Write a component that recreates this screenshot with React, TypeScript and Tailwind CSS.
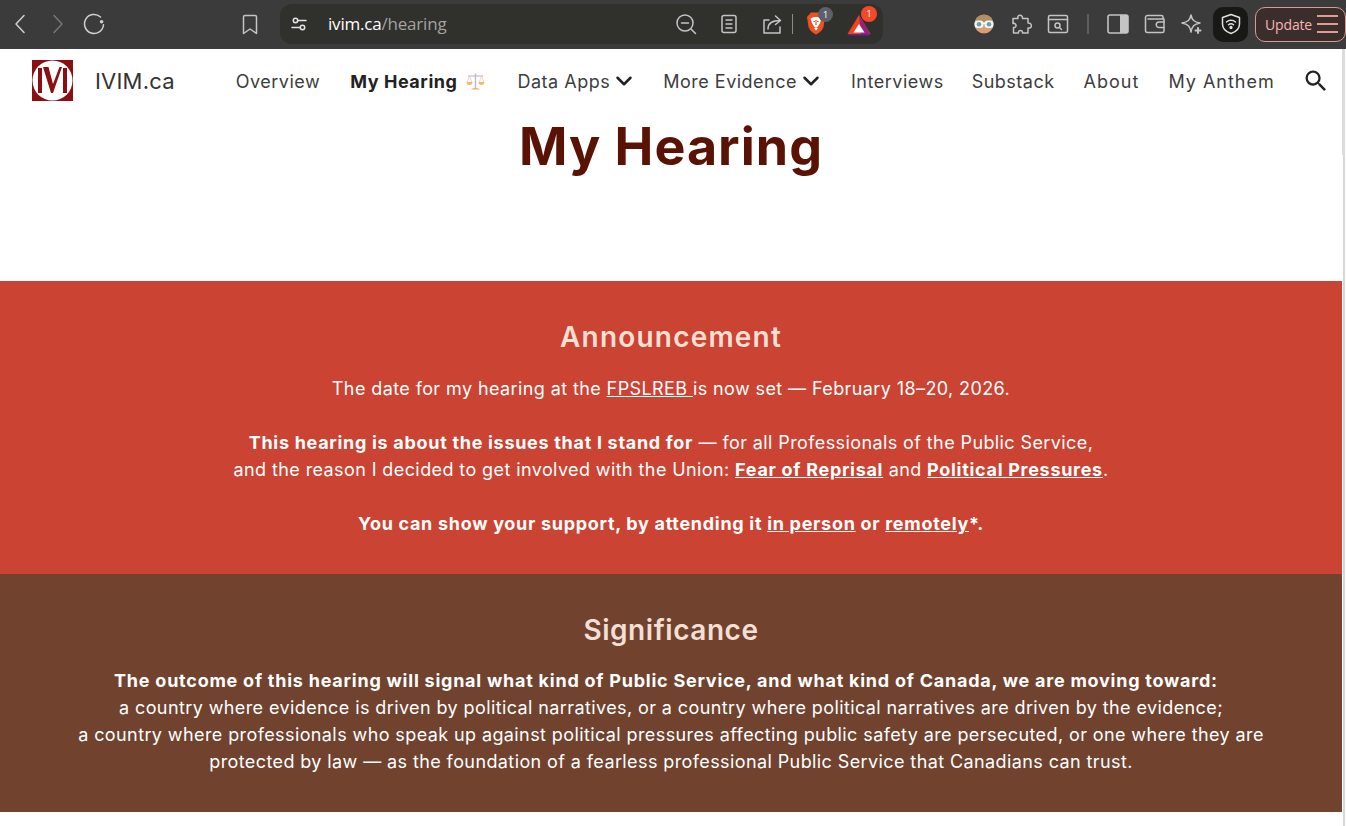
import { ChevronDown } from "lucide-react";
import { MdSearch } from "react-icons/md";

const FONT = "font-['Inter','Liberation_Sans',sans-serif]";

// Browser toolbar icons, stroked the same grey
function ToolIcon({ children, w = 24, h = 24, className = "" }: { children: React.ReactNode; w?: number; h?: number; className?: string }) {
  return (
    <svg
      width={w}
      height={h}
      viewBox={`0 0 ${w} ${h}`}
      fill="none"
      stroke="currentColor"
      strokeWidth="1.5"
      strokeLinecap="round"
      strokeLinejoin="round"
      className={className}
    >
      {children}
    </svg>
  );
}

function BrowserBar() {
  return (
    <div className="flex h-[49px] w-full shrink-0 items-center bg-[#3b3b3b] pb-[1px] text-[#c4c4c4]">
      <ToolIcon className="ml-[8px] text-[#d0d0d0]">
        <path d="M16 6 L8 14.5 L16 23" transform="translate(0 -2.5)" />
      </ToolIcon>
      <ToolIcon className="ml-[13px] text-[#777]">
        <path d="M9 6 L17 14.5 L9 23" transform="translate(0 -2.5)" />
      </ToolIcon>
      <ToolIcon className="ml-[13px] text-[#d0d0d0]">
        <path d="M18.5 5 A9.5 9.5 0 1 0 21.5 12.8" />
        <circle cx="19.6" cy="9.8" r="1.8" fill="currentColor" stroke="none" />
      </ToolIcon>
      <ToolIcon className="ml-[132px]">
        <path d="M5.5 4.5 A1.5 1.5 0 0 1 7 3 H17 A1.5 1.5 0 0 1 18.5 4.5 V21 L12 16.5 L5.5 21 Z" transform="translate(0 0.5)" />
      </ToolIcon>

      {/* Address bar */}
      <div className="ml-[18px] flex h-[40px] w-[603px] items-center rounded-[12px] bg-[#30302c]">
        <ToolIcon className="ml-[7px] text-[#e4e4e4]">
          <circle cx="8.5" cy="8.5" r="2.2" />
          <path d="M11 8.5 H19" />
          <circle cx="15.5" cy="15.5" r="2.2" />
          <path d="M5 15.5 H13" />
        </ToolIcon>
        <div className="ml-[17px] w-[118px] whitespace-nowrap font-['Open_Sans',sans-serif] text-[17px] tracking-[-0.2px]">
          <span className="text-white">ivim.ca</span>
          <span className="text-[#a3a3a0]">/hearing</span>
        </div>
        <ToolIcon className="ml-[228px]">
          <circle cx="11" cy="11" r="8" />
          <path d="M7.5 11 H14.5 M17 17 L21.5 21.5" />
        </ToolIcon>
        <ToolIcon className="ml-[19px]">
          <rect x="5" y="3.5" width="14" height="17" rx="2" />
          <path d="M9 8 H15 M9 12 H15 M9 16 H15" />
        </ToolIcon>
        <ToolIcon className="ml-[18px]">
          <path d="M10 8 H5 V21 H21 V15" />
          <path d="M9 17 C9 11 13 8.5 21 8.5 M16.5 4 L21.5 8.5 L16.5 12.5" />
        </ToolIcon>
        <div className="ml-[9px] h-[20px] w-px bg-[#8b8b88]" />

        {/* Shields */}
        <div className="relative ml-[13px] h-[24px] w-[24px]">
          <svg width="20" height="23" viewBox="0 0 20 23">
            <path d="M5 0.5 H15 L19 5 L17.5 15 C16 19 13 21 10 22.5 C7 21 4 19 2.5 15 L1 5 Z" fill="#f1501f" />
            <path d="M4.5 6.5 L8 5 H12 L15.5 6.5 L14 11 L12 14.5 L10 16 L8 14.5 L6 11 Z" fill="#fff" />
            <path d="M7.5 9.5 H9 M11 9.5 H12.5 M10 8 V13" stroke="#f1501f" strokeWidth="1.1" />
            <path d="M8 16.5 L10 15.5 L12 16.5 L10 18.5 Z" fill="#fff" />
          </svg>
          <div className="absolute left-[12px] top-[-5px] flex h-[15px] w-[15px] items-center justify-center rounded-full bg-[#5d5f6b] font-['Open_Sans',sans-serif] text-[9px] text-white">
            1
          </div>
        </div>

        {/* Rewards triangle */}
        <div className="relative ml-[17px] h-[24px] w-[24px]">
          <svg width="24" height="22" viewBox="0 0 24 22" className="mt-[2px]">
            <path d="M12 1 L0.5 20 H23.5 Z" fill="#f1431f" />
            <path d="M12 1 L23.5 20 H14 Z" fill="#9b1f7b" />
            <path d="M0.5 20 H23.5 L22 21.5 H2 Z" fill="#62249b" />
            <path d="M12 10 L6.5 18.5 H17.5 Z" fill="#fff" />
          </svg>
          <div className="absolute left-[14px] top-[-6px] flex h-[16px] w-[16px] items-center justify-center rounded-full bg-[#f5482b] font-['Open_Sans',sans-serif] text-[9px] text-white">
            1
          </div>
        </div>
      </div>

      {/* Extensions */}
      <svg width="20" height="20" viewBox="0 0 20 20" className="ml-[91px]">
        <circle cx="10" cy="10" r="9.5" fill="#dc9c74" />
        <path d="M0.8 8 A9.5 9.5 0 0 1 19.2 8 Z" fill="#b08f62" />
        <rect x="0.5" y="6.5" width="9" height="7.5" rx="3.2" fill="#eef6f6" />
        <rect x="10.5" y="6.5" width="9" height="7.5" rx="3.2" fill="#eef6f6" />
        <rect x="9" y="8.5" width="2" height="1.5" fill="#eef6f6" />
        <circle cx="5" cy="10.2" r="2.3" fill="#6d9fb0" />
        <circle cx="15" cy="10.2" r="2.3" fill="#6d9fb0" />
      </svg>
      <ToolIcon className="ml-[15px]">
        <path d="M9 6.5 C7.5 2.5 14 2 13.5 6.5 H19 V11 C23.5 10.5 23.5 17 19 16 V21 H13.5 C14 17.5 9 17.5 9.5 21 H4.5 V15.5 C8 16 8 10.5 4 11.5 V6.5 Z" />
      </ToolIcon>
      <ToolIcon className="ml-[13px]">
        <rect x="2.5" y="3.5" width="19" height="17" rx="1.5" />
        <path d="M2.5 7.5 H21.5" />
        <circle cx="11.5" cy="13.5" r="2.5" />
        <path d="M13.5 15.5 L15.5 17.5" />
      </ToolIcon>
      <div className="ml-[17px] h-[20px] w-[2px] bg-[#5e5e5e]" />
      <svg width="22" height="20" viewBox="0 0 22 20" className="ml-[18px] text-[#c4c4c4]">
        <rect x="1" y="1" width="20" height="18" rx="2" fill="none" stroke="currentColor" strokeWidth="1.6" />
        <rect x="13" y="1" width="8" height="18" fill="currentColor" />
      </svg>
      <ToolIcon className="ml-[14px]">
        <path d="M20 7 V5 A1.5 1.5 0 0 0 18.5 3.5 H4.5 A2 2 0 0 0 2.5 5.5 V18.5 A2 2 0 0 0 4.5 20.5 H19.5 A1.5 1.5 0 0 0 21 19 V7 H5" />
        <path d="M21 10 H16 A2.5 2.5 0 0 0 16 15.5 H21" />
      </ToolIcon>
      <ToolIcon className="ml-[13px]">
        <path d="M11 3 C12 8 14 10 20 11 C14 12 12 14.5 11 20 C10 14.5 8 12 2 11 C8 10 10 8 11 3 Z" />
        <path d="M18 16 V21 M15.5 18.5 H20.5" strokeWidth="2" />
      </ToolIcon>

      {/* VPN shield tile */}
      <div className="ml-[9px] flex h-[35px] w-[35px] items-center justify-center rounded-[10px] bg-[#181816]">
        <ToolIcon className="text-[#e0e0e0]">
          <path d="M12 2.5 L20.5 5.5 V12 C20.5 17 16.5 20 12 21.5 C7.5 20 3.5 17 3.5 12 V5.5 Z" />
          <path d="M7.5 10 C10 7.8 14 7.8 16.5 10 M9.5 12.8 C11 11.5 13 11.5 14.5 12.8" />
          <circle cx="12" cy="15.5" r="0.9" fill="currentColor" />
        </ToolIcon>
      </div>

      {/* Update */}
      <div className="ml-[7px] flex h-[35px] w-[91px] items-center rounded-[10px] border border-[#d79a93] bg-[#3a2e2d] pl-[9px]">
        <span className="font-['Open_Sans',sans-serif] text-[14px] tracking-[-0.15px] text-[#f5b5ae]">Update</span>
        <div className="ml-[5px] flex flex-col gap-[6px]">
          <div className="h-[2px] w-[21px] bg-[#e39a92]" />
          <div className="h-[2px] w-[21px] bg-[#e39a92]" />
          <div className="h-[2px] w-[21px] bg-[#e39a92]" />
        </div>
      </div>
    </div>
  );
}

function Logo() {
  return (
    <svg width="41" height="41" viewBox="0 0 41 41" className="-mt-[2px] shrink-0">
      <rect width="41" height="41" fill="#8b0e12" />
      <circle cx="20.5" cy="20.5" r="20" fill="#fff" />
      <path d="M6 8 H10 V33 H6 Z M31 8 H35 V33 H31 Z" fill="#8b0e12" />
      <path d="M11 7 H16.5 L21 24 L27.5 7 H30 L21 33 H19 Z" fill="#8b0e12" />
    </svg>
  );
}

// Balance scale after "My Hearing"
function Scales() {
  return (
    <svg width="19" height="19" viewBox="0 0 19 19" className="ml-[8px] shrink-0">
      <path d="M9.5 1.5 V16" stroke="#c4b3cf" strokeWidth="1.4" />
      <path d="M2 4 H17" stroke="#c9b6d4" strokeWidth="1.2" />
      <path d="M3.5 4.5 L1 10 M3.5 4.5 L6 10 M15.5 4.5 L13 10 M15.5 4.5 L18 10" stroke="#e6c9a0" strokeWidth="0.7" />
      <path d="M0.5 10 H6.5 A3 3 0 0 1 0.5 10 Z M12.5 10 H18.5 A3 3 0 0 1 12.5 10 Z" fill="#f5b76e" />
      <path d="M5 17.5 C6 15.5 13 15.5 14 17.5 Z" fill="#f2b166" />
    </svg>
  );
}

function NavBar() {
  const link = "text-[18px] text-[#3d3d3d] tracking-[0.5px]";
  return (
    <div className={`flex h-[66px] items-center pb-[2px] pl-[32px] ${FONT}`}>
      <Logo />
      <span className="ml-[22px] text-[22px] tracking-[0.2px] text-[#333]">IVIM.ca</span>
      <span className={`ml-[61px] ${link}`}>Overview</span>
      <span className="ml-[30px] flex items-center text-[18px] font-bold tracking-[0.55px] text-[#222]">
        My Hearing
        <Scales />
      </span>
      <span className={`ml-[33px] flex items-center ${link}`}>
        Data Apps
        <ChevronDown size={26} strokeWidth={2.3} className="ml-[1px] text-[#222]" />
      </span>
      <span className={`ml-[26px] flex items-center ${link}`}>
        More Evidence
        <ChevronDown size={26} strokeWidth={2.3} className="ml-[1px] text-[#222]" />
      </span>
      <span className={`ml-[27px] ${link}`}>Interviews</span>
      <span className={`ml-[28px] ${link}`}>Substack</span>
      <span className={`ml-[29px] tracking-[1px] ${link}`}>About</span>
      <span className={`ml-[29px] tracking-[1px] ${link}`}>My Anthem</span>
      <MdSearch size={28} className="ml-[27px] text-[#222]" />
    </div>
  );
}

export default function App() {
  const bold = "font-bold tracking-[0.7px]";
  return (
    <div className="flex h-[826px] w-full flex-col overflow-hidden bg-white">
      <BrowserBar />
      <div className="flex min-h-0 flex-1">
        <div className={`w-[1342px] shrink-0 ${FONT}`}>
          <NavBar />
          <h1 className="mt-[1px] text-center text-[52px] font-bold leading-[62px] tracking-[1px] text-[#5a1204]">My Hearing</h1>
          <div className="h-[103px]" />

          {/* Announcement */}
          <section className="flex h-[293px] flex-col items-center bg-[#cb4332] pt-[39px] text-center text-[18px] leading-[27px] tracking-[0.4px] text-white">
            <h2 className="text-[28px] font-semibold leading-[34px] tracking-[1.2px] text-[#f8dfd3]">Announcement</h2>
            <p className="mt-[21px]">
              The date for my hearing at the <span className="underline">FPSLREB </span>is now set — February 18–20, 2026.
            </p>
            <p className="mt-[27px]">
              <span className={bold}>This hearing is about the issues that I stand for</span> — for all Professionals of the Public Service,
              <br />
              and the reason I decided to get involved with the Union: <span className={`underline ${bold}`}>Fear of Reprisal</span> and{" "}
              <span className={`underline ${bold}`}>Political Pressures</span>.
            </p>
            <p className={`mt-[27px] ${bold}`}>
              You can show your support, by attending it <span className="underline">in person</span> or{" "}
              <span className="underline">remotely</span>*.
            </p>
          </section>

          {/* Significance */}
          <section className="flex h-[238px] flex-col items-center bg-[#71432f] pt-[39px] text-center text-[18px] leading-[27px] tracking-[0.4px] text-white">
            <h2 className="text-[28px] font-semibold leading-[34px] tracking-[0.55px] text-[#f3dfd3]">Significance</h2>
            <p className="mt-[20px]">
              <span className="font-bold tracking-[0.76px]">The outcome of this hearing will signal what kind of Public Service, and what kind of Canada, we are moving toward:&nbsp;&nbsp;</span>
              <br />
              a country where evidence is driven by political narratives, or a country where political narratives are driven by the evidence;
              <br />
              a country where professionals who speak up against political pressures affecting public safety are persecuted, or one where they are
              <br />
              protected by law — as the foundation of a fearless professional Public Service that Canadians can trust.
            </p>
          </section>
        </div>

        {/* Scrollbar */}
        <div className="w-[4px] shrink-0 bg-white">
          <div className="h-[106px] w-[3px] bg-[#dcdcdc]" />
          <div className="ml-[1px] h-full w-[2px] bg-[#d6d6d6]" />
        </div>
      </div>
    </div>
  );
}
